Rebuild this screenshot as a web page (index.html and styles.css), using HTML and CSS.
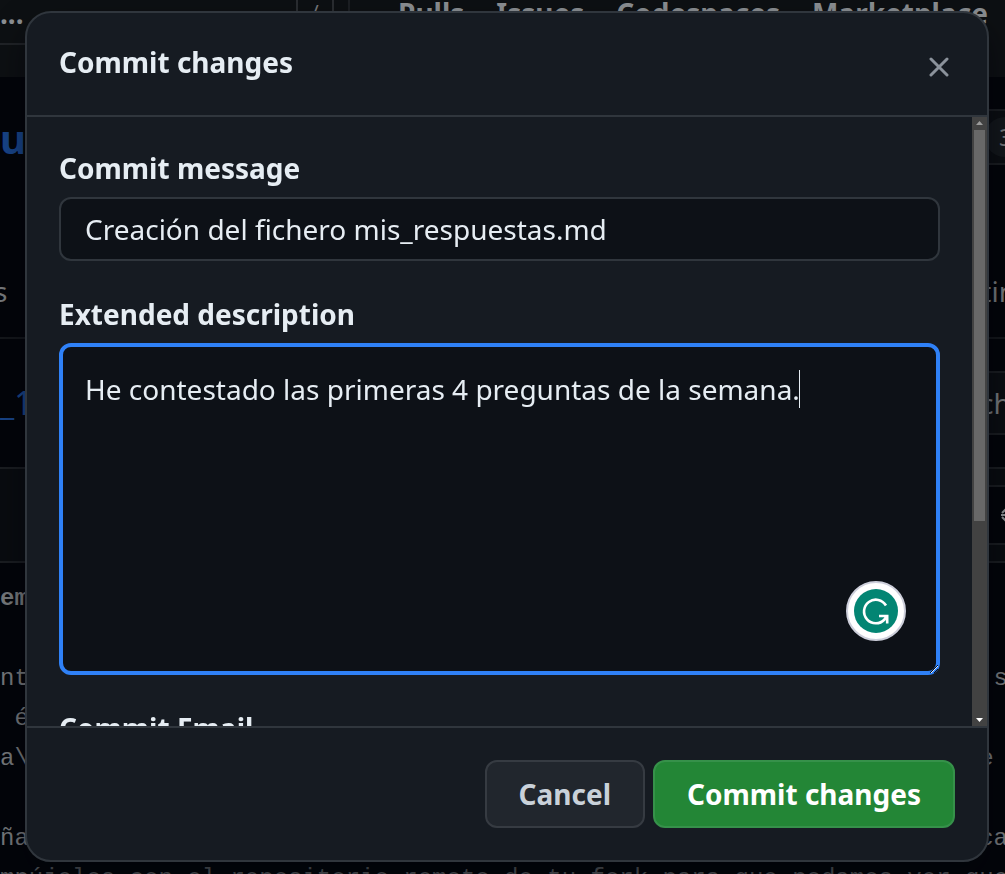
FILE: index.html
```html
<!DOCTYPE html>
<html lang="es">
<head>
<meta charset="utf-8">
<meta name="viewport" content="width=device-width, initial-scale=1">
<title>Commit changes</title>
<link rel="stylesheet" href="styles.css">
</head>
<body>
<div class="page" aria-hidden="true">
  <div class="topbar">
    <span class="crumb">...</span>
    <span class="search"><span class="slash">/</span></span>
    <nav class="nav"><span>Pulls</span><span>Issues</span><span>Codespaces</span><span>Marketplace</span></nav>
  </div>
  <div class="repo"><span class="repo-name">u</span><span class="counter-box"><span class="counter">3</span></span></div>
  <div class="about"><span>s</span><span>tin</span></div>
  <div class="file"><span class="file-link">_1</span><span class="file-button">ch</span></div>
  <div class="toolbar"><span class="mode"><svg width="16" height="20" viewBox="0 0 16 20"><path d="M1 8 5 4l4 4M1 12l4 4 4-4M0 10h16" fill="none" stroke="currentColor" stroke-width="2"/></svg></span></div>
  <div class="code">
    <div class="line"><b>em</b></div>
    <div class="line"></div>
    <div class="line"><span>nt</span><span>s</span></div>
    <div class="line"><span> é</span></div>
    <div class="line"><span>a\</span><span>e </span></div>
    <div class="line"></div>
    <div class="line"><span>ña</span><span>ca</span></div>
    <div class="line faint"><span>mpújelos con el repositorio remoto de tu fork para que podamos ver que</span></div>
  </div>
</div>

<form class="dialog" role="dialog" aria-labelledby="dialog-title">
  <header class="dialog-header">
    <h1 class="dialog-title" id="dialog-title">Commit changes</h1>
    <button class="close" type="button" aria-label="Close"><svg width="20" height="20" viewBox="0 0 20 20"><path d="M2 2 18 18M18 2 2 18" fill="none" stroke="currentColor" stroke-width="3" stroke-linecap="round"/></svg></button>
  </header>
  <div class="dialog-body">
    <div class="fields">
      <div class="field">
        <label class="label" for="message">Commit message</label>
        <input class="control" id="message" type="text" value="Creación del fichero mis_respuestas.md">
      </div>
      <div class="field">
        <label class="label" for="description">Extended description</label>
        <div class="editor">
          <textarea class="control description" id="description" spellcheck="false">He contestado las primeras 4 preguntas de la semana.</textarea>
          <span class="caret"></span>
          <svg class="assistant" width="60" height="60" viewBox="0 0 60 60">
            <circle cx="30" cy="30" r="29" fill="#fff" stroke="#cdcfdb" stroke-width="2"/>
            <circle cx="30" cy="30" r="22" fill="#038573"/>
            <path d="M40 24.500A11.800 11.800 0 1 0 38.500 38.500L40.500 35.500M33 35H41.200V42.500" fill="none" stroke="#fff" stroke-width="2.600"/>
          </svg>
          <svg class="grip" width="8" height="8" viewBox="0 0 8 8"><path d="M0 8 8 0M4 8 8 4" stroke="#0d1117" stroke-width="1"/><path d="M1 8 8 1" stroke="#dce8fa" stroke-width="1"/></svg>
        </div>
      </div>
      <div class="field"><span class="label">Commit Email</span></div>
    </div>
    <div class="scrollbar">
      <svg width="7" height="4" viewBox="0 0 7 4"><path d="M0 4 3.500 0 7 4Z" fill="#9b9b9b"/></svg>
      <span class="track"><span class="thumb"></span></span>
      <svg width="7" height="4" viewBox="0 0 7 4"><path d="M0 0H7L3.500 4Z" fill="#fff"/></svg>
    </div>
  </div>
  <footer class="dialog-footer">
    <button class="button" type="button">Cancel</button>
    <button class="button primary" type="submit">Commit changes</button>
  </footer>
</form>
</body>
</html>
```
FILE: styles.css
```css
* { box-sizing: border-box; }
html, body { height: 100%; }
body {
  margin: 0;
  overflow: hidden;
  background: #03050a;
  color: #e6edf3;
  font: 28px/42px "Noto Sans", "Open Sans", sans-serif;
}

/* Dimmed page behind the dialog */
.page { color: #75787b; }
.topbar {
  display: flex;
  height: 77px;
  background: #0d1013;
  font-weight: 700;
}
.crumb {
  flex: none;
  width: 296px;
  height: 45px;
  border-bottom: 2px solid #202327;
  line-height: 26px;
  color: #8b8f93;
}
.search {
  flex: none;
  display: flex;
  width: 54px;
  height: 44px;
  border-right: 2px solid #1c1f23;
}
.slash {
  width: 38px;
  border: solid #2a2d31;
  border-width: 0 2px;
  text-align: center;
  font-size: 20px;
  line-height: 24px;
  font-weight: 400;
}
.nav {
  display: flex;
  gap: 32px;
  padding-left: 48px;
  line-height: 26px;
  color: #8b8f93;
}
.repo {
  display: flex;
  justify-content: space-between;
  height: 188px;
  padding-top: 32px;
}
.repo-name {
  font-size: 40px;
  line-height: 60px;
  font-weight: 700;
  color: #184488;
}
.counter-box {
  width: 60px;
  height: 56px;
  padding: 6px 0 6px 38px;
  border: 2px solid #1a1d21;
  border-right: 0;
  background: #0b0e12;
}
.counter {
  display: block;
  padding-left: 14px;
  border-radius: 20px 0 0 20px;
  background: #13171b;
  font-size: 24px;
  line-height: 40px;
}
.about {
  display: flex;
  justify-content: space-between;
  height: 74px;
  padding-top: 5px;
  margin: 0 -11px 0 -6px;
  border-bottom: 2px solid #14171b;
}
.file {
  display: flex;
  justify-content: space-between;
  height: 130px;
  padding-top: 32px;
  border-bottom: 2px solid #1a1d21;
}
.file-link {
  font-size: 32px;
  line-height: 64px;
  color: #184488;
}
.file-button {
  width: 60px;
  height: 64px;
  padding-left: 33px;
  border: 2px solid #1a1d21;
  border-right: 0;
  background: #0b0e12;
  line-height: 60px;
}
.toolbar {
  display: flex;
  justify-content: flex-end;
  height: 94px;
  padding-top: 16px;
  border-bottom: 2px solid #1a1d21;
  background: #090c10;
}
.mode {
  display: flex;
  align-items: center;
  width: 60px;
  height: 60px;
  padding-left: 54px;
  border: 2px solid #1a1d21;
  border-right: 0;
  background: #03050a;
  color: #8b8f93;
}
.mode svg { flex: none; }
.code {
  margin-right: -3px;
  padding-top: 16px;
  font: 24px/40px "Liberation Mono", monospace;
}
.line {
  display: flex;
  justify-content: space-between;
  height: 40px;
  white-space: pre;
}
.faint { color: #56595d; }

/* Dialog */
.dialog {
  position: fixed;
  inset: 11px 16px 12px 25px;
  display: flex;
  flex-direction: column;
  overflow: hidden;
  border: 2px solid #30363d;
  border-radius: 26px;
  background: #161b22;
  box-shadow: 0 16px 32px rgba(1, 4, 9, .5);
}
.dialog-header {
  display: flex;
  justify-content: space-between;
  padding: 22px 16px 16px 32px;
  border-bottom: 2px solid #30363d;
}
.dialog-title {
  margin: 6px 0 0;
  font-size: 28px;
  line-height: 42px;
  font-weight: 700;
}
.close {
  display: grid;
  place-items: center;
  width: 64px;
  height: 64px;
  padding: 0;
  border: 0;
  background: none;
  color: #8b929b;
}
.dialog-body {
  flex: 1;
  display: flex;
  min-height: 0;
}
.fields {
  flex: 1;
  display: flex;
  flex-direction: column;
  gap: 32px;
  min-width: 0;
  padding: 30px 32px 0;
  overflow: hidden;
}
.field {
  flex: none;
  display: flex;
  flex-direction: column;
  gap: 8px;
}
.label { font-weight: 700; }
.control {
  display: block;
  width: 100%;
  height: 64px;
  margin: 0;
  padding: 0 24px;
  border: 2px solid #30363d;
  border-radius: 12px;
  outline: 0;
  background: #0d1117;
  color: #e6edf3;
  font: inherit;
}
.editor { position: relative; }
.description {
  height: 332px;
  padding: 21px 22px;
  border: 4px solid #2f81f7;
  resize: none;
  overflow: hidden;
}
.caret {
  position: absolute;
  top: 27px;
  left: 740px;
  width: 1px;
  height: 38px;
  background: #e6edf3;
}
.assistant {
  position: absolute;
  right: 34px;
  bottom: 34px;
}
.grip {
  position: absolute;
  right: 2px;
  bottom: 2px;
}
.scrollbar {
  flex: none;
  display: flex;
  flex-direction: column;
  align-items: center;
  gap: 5px;
  width: 15px;
  padding: 4px 0;
  background: #424242;
}
.track {
  flex: 1;
  width: 11px;
}
.thumb {
  display: block;
  height: 67%;
  background: #686868;
}
.dialog-footer {
  display: flex;
  justify-content: flex-end;
  gap: 8px;
  padding: 32px;
  border-top: 2px solid #30363d;
}
.button {
  height: 68px;
  padding: 0 32px;
  border: 2px solid #363b42;
  border-radius: 12px;
  background: #21262d;
  color: #c9d1d9;
  font: inherit;
  font-weight: 700;
}
.primary {
  border-color: #36914a;
  background: #238636;
  color: #fff;
}
```
